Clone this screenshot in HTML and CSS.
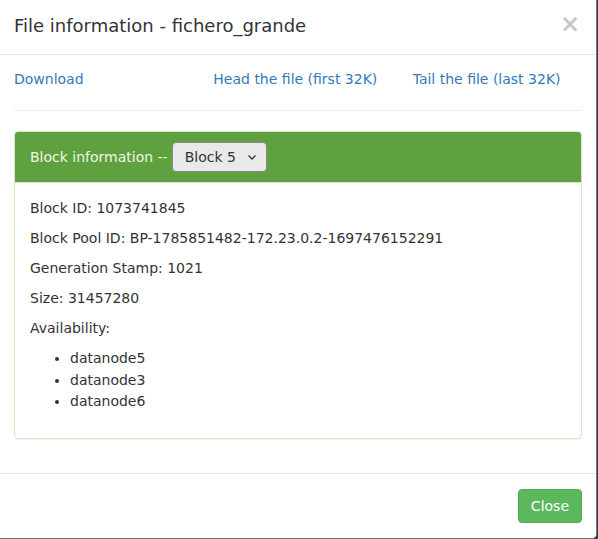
FILE: index.html
```html
<!DOCTYPE html>
<html>
<head>
<meta charset="utf-8">
<link rel="stylesheet" href="styles.css">
</head>
<body>
<div class="modal">
  <div class="modal-header">
    <h4 class="modal-title">File information - fichero_grande</h4>
    <span class="close">&times;</span>
  </div>
  <div class="modal-body">
    <div class="links">
      <a href="#">Download</a>
      <a href="#">Head the file (first 32K)</a>
      <a href="#">Tail the file (last 32K)</a>
    </div>
    <hr class="sep">
    <div class="panel">
      <div class="panel-heading">
        <span>Block information --</span>
        <span class="select">Block 5
          <svg width="10" height="8" viewBox="0 0 10 8"><path d="M1.5 2.5 L5 6 L8.5 2.5" fill="none" stroke="#333" stroke-width="1.3"/></svg>
        </span>
      </div>
      <div class="panel-body">
        <p>Block ID: 1073741845</p>
        <p>Block Pool ID: BP-1785851482-172.23.0.2-1697476152291</p>
        <p>Generation Stamp: 1021</p>
        <p>Size: 31457280</p>
        <p>Availability:</p>
        <ul>
          <li>datanode5</li>
          <li>datanode3</li>
          <li>datanode6</li>
        </ul>
      </div>
    </div>
  </div>
  <div class="modal-footer">
    <button class="btn">Close</button>
  </div>
</div>
</body>
</html>
```

FILE: styles.css
```css
html, body {
  margin: 0;
  padding: 0;
  background: #3b3b3b;
  width: 598px;
  height: 539px;
  overflow: hidden;
}
body {
  font-family: "DejaVu Sans", sans-serif;
  font-size: 14px;
  line-height: 20px;
  color: #333;
}
.modal {
  box-sizing: border-box;
  width: 597px;
  height: 539px;
  background: #fff;
  border-right: 1px solid #777;
  border-bottom: 1px solid #777;
  border-bottom-right-radius: 5px;
  display: flex;
  flex-direction: column;
  overflow: hidden;
}
.modal-header {
  box-sizing: border-box;
  flex-shrink: 0;
  height: 55px;
  border-bottom: 1px solid #e5e5e5;
  padding: 0 16px 2px 14px;
  display: flex;
  align-items: center;
  justify-content: space-between;
}
.modal-title {
  margin: 0;
  font-size: 18px;
  font-weight: normal;
  line-height: 26px;
  color: #333;
}
.close {
  font-size: 24px;
  font-weight: bold;
  color: #c8c8c8;
  line-height: 20px;
  margin-top: -4px;
}
.modal-body {
  padding: 14px 14px 15px 14px;
  flex: 1;
  min-height: 0;
}
.links {
  display: grid;
  grid-template-columns: repeat(3, 1fr);
  column-gap: 30px;
  width: 568px;
}
.links a {
  color: #337ab7;
  text-decoration: none;
}
.sep {
  margin: 21px 0 20px;
  width: 568px;
  border: 0;
  border-top: 1px solid #eee;
}
.panel {
  width: 568px;
  box-sizing: border-box;
  border: 1px solid #d6e9c6;
  border-radius: 4px;
  margin-bottom: 20px;
  box-shadow: 0 1px 1px rgba(0,0,0,0.05);
}
.panel-heading {
  background: #5fa13e;
  color: #eef6e8;
  padding: 10px 15px;
  border-bottom: 1px solid #d6e9c6;
  border-top-left-radius: 3px;
  border-top-right-radius: 3px;
  display: flex;
  align-items: center;
  gap: 4px;
}
.select {
  box-sizing: border-box;
  height: 30px;
  width: 95px;
  background: #e9e9e9;
  border: 1px solid #8a8a8a;
  border-radius: 4px;
  color: #333;
  display: flex;
  align-items: center;
  justify-content: space-between;
  padding: 0 9px 0 12px;
}
.panel-body {
  padding: 15px;
}
.panel-body p {
  margin: 0 0 10px;
}
.panel-body ul {
  margin: 0 0 10px;
  padding-left: 40px;
}
.panel-body li {
  line-height: 21.5px;
}
.modal-footer {
  flex-shrink: 0;
  border-top: 1px solid #e5e5e5;
  padding: 15px 14px 15px 15px;
  display: flex;
  justify-content: flex-end;
}
.btn {
  font-family: "DejaVu Sans", sans-serif;
  font-size: 14px;
  line-height: 20px;
  padding: 6px 12px;
  background: #5cb85c;
  border: 1px solid #4cae4c;
  border-radius: 4px;
  color: #fff;
}
```
